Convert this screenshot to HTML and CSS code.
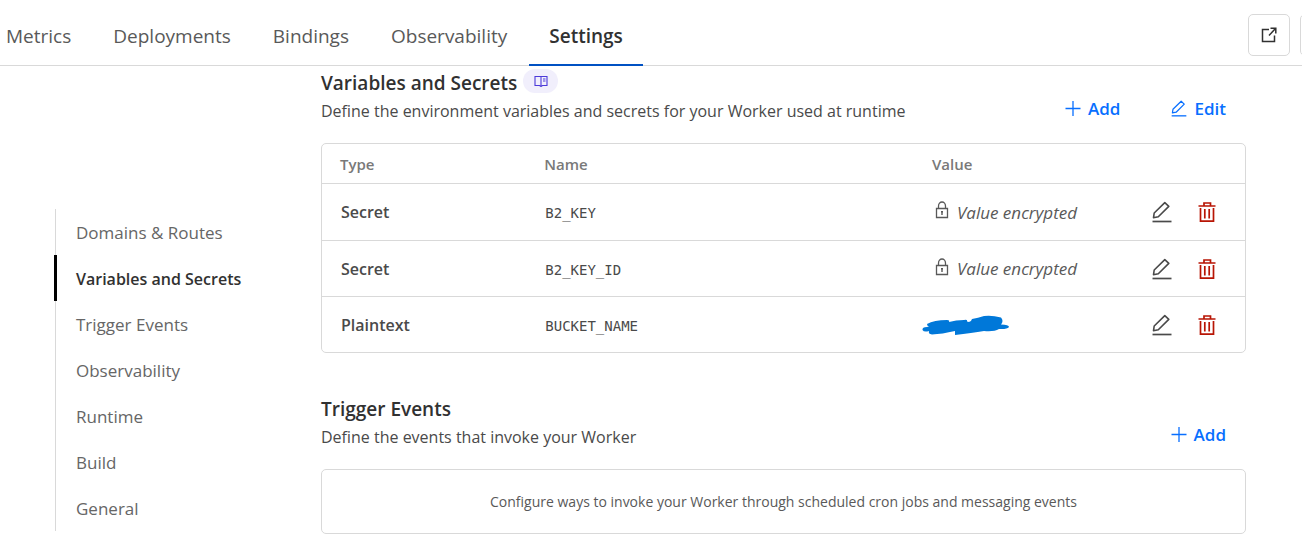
FILE: index.html
```
<!DOCTYPE html>
<html lang="en">
<head>
<meta charset="utf-8">
<meta name="viewport" content="width=device-width, initial-scale=1">
<title>Worker settings</title>
<link rel="stylesheet" href="styles.css">
</head>
<body>
<svg class="sprite" aria-hidden="true">
  <symbol id="plus" viewBox="0 0 16 16"><path d="M8 0.500V15.500M0.500 8H15.500" fill="none" stroke="currentColor" stroke-width="1.300"/></symbol>
  <symbol id="pencil" viewBox="0 0 20 22"><path d="M1.500 16.700L2.200 12L12.800 1.600L16.800 5.400L6.300 15.800Z" fill="none" stroke="currentColor" stroke-width="1.600" stroke-linejoin="round"/><path d="M0.500 20.500H19.500" stroke="currentColor" stroke-width="1.700"/></symbol>
  <symbol id="trash" viewBox="0 0 18 22"><path d="M0.500 5H17.500M6 5V2H12.500V5M2.500 7V20.200H15.500V7M6.800 8V17.500M11.200 8V17.500" fill="none" stroke="currentColor" stroke-width="1.700"/></symbol>
  <symbol id="lock" viewBox="0 0 14 18"><path d="M1.500 7.500H12.500V16.500H1.500ZM3.500 7.500V5A3.500 4 0 0 1 10.500 5V7.500" fill="none" stroke="currentColor" stroke-width="1.300"/><path d="M7 10V14M6 10.800H8" stroke="currentColor" stroke-width="1.400"/></symbol>
</svg>

<header class="topbar">
  <nav class="tabs" aria-label="Worker">
    <a class="tab" href="#">Metrics</a>
    <a class="tab" href="#">Deployments</a>
    <a class="tab" href="#">Bindings</a>
    <a class="tab" href="#">Observability</a>
    <a class="tab tab-active" href="#" aria-current="page">Settings</a>
  </nav>
  <div class="topbar-actions">
    <button class="square-button" type="button" aria-label="Open in new tab">
      <svg width="16" height="16" viewBox="0 0 16 16"><path d="M8 2.500H1.500V14.500H13.500V8.500M8 8.500L14.500 1.500M9.500 1.200H14.800V6.500" fill="none" stroke="currentColor" stroke-width="1.500"/></svg>
    </button>
    <button class="square-button" type="button" aria-label="More"></button>
  </div>
</header>

<div class="layout">
  <nav class="sidebar" aria-label="Settings sections">
    <a class="side-link" href="#">Domains &amp; Routes</a>
    <a class="side-link side-link-active" href="#variables" aria-current="true">Variables and Secrets</a>
    <a class="side-link" href="#triggers">Trigger Events</a>
    <a class="side-link" href="#">Observability</a>
    <a class="side-link" href="#">Runtime</a>
    <a class="side-link" href="#">Build</a>
    <a class="side-link" href="#">General</a>
  </nav>

  <main class="content">
    <section class="section" id="variables">
      <div class="section-head">
        <div>
          <div class="title-row">
            <h2 class="section-title">Variables and Secrets</h2>
            <a class="docs-badge" href="#" aria-label="Documentation">
              <svg width="14" height="12" viewBox="0 0 14 12"><path d="M7 1.500H1V10.500H5.500L7 11.500L8.500 10.500H13V1.500H7V11" fill="none" stroke="currentColor" stroke-width="1.100"/><path d="M9 4H11.500M9 6H11.500" stroke="currentColor"/></svg>
            </a>
          </div>
          <p class="section-text">Define the environment variables and secrets for your Worker used at runtime</p>
        </div>
        <div class="section-actions">
          <button class="text-button" type="button"><svg class="action-icon"><use href="#plus"/></svg>Add</button>
          <button class="text-button" type="button"><svg class="action-icon"><use href="#pencil"/></svg>Edit</button>
        </div>
      </div>
      <div class="card">
        <table class="table">
          <thead>
            <tr><th class="col-type">Type</th><th class="col-name">Name</th><th class="col-value">Value</th><th class="col-tools"></th></tr>
          </thead>
          <tbody>
            <tr>
              <td class="type">Secret</td><td class="name">B2_KEY</td>
              <td><span class="encrypted"><svg class="lock-icon"><use href="#lock"/></svg>Value encrypted</span></td>
              <td><div class="tools"><button class="icon-button" type="button" aria-label="Edit B2_KEY"><svg class="pencil-icon"><use href="#pencil"/></svg></button><button class="icon-button danger" type="button" aria-label="Delete B2_KEY"><svg class="trash-icon"><use href="#trash"/></svg></button></div></td>
            </tr>
            <tr>
              <td class="type">Secret</td><td class="name">B2_KEY_ID</td>
              <td><span class="encrypted"><svg class="lock-icon"><use href="#lock"/></svg>Value encrypted</span></td>
              <td><div class="tools"><button class="icon-button" type="button" aria-label="Edit B2_KEY_ID"><svg class="pencil-icon"><use href="#pencil"/></svg></button><button class="icon-button danger" type="button" aria-label="Delete B2_KEY_ID"><svg class="trash-icon"><use href="#trash"/></svg></button></div></td>
            </tr>
            <tr>
              <td class="type">Plaintext</td><td class="name">BUCKET_NAME</td>
              <td><svg width="88" height="20" viewBox="0 0 88 20" role="img" aria-label="Hidden value"><path d="M5 12Q0 12 0.500 15Q2 17.500 7 16Q6 19 10 19.500Q20 19 33 16V20Q50 18 62 16Q72 17 77 14Q85 14.500 87 12Q87 9.500 79 9.500Q82 6 79 2.500Q70 0 62 1Q56 3 50 4Q49 8 45 6.500Q46 4 42 5Q34 5 27 7Q28 5 25 5Q12 5 5 9Q5 11 7 11.500Z" fill="#0078d9"/></svg></td>
              <td><div class="tools"><button class="icon-button" type="button" aria-label="Edit BUCKET_NAME"><svg class="pencil-icon"><use href="#pencil"/></svg></button><button class="icon-button danger" type="button" aria-label="Delete BUCKET_NAME"><svg class="trash-icon"><use href="#trash"/></svg></button></div></td>
            </tr>
          </tbody>
        </table>
      </div>
    </section>

    <section class="section" id="triggers">
      <div class="section-head">
        <div>
          <h2 class="section-title">Trigger Events</h2>
          <p class="section-text">Define the events that invoke your Worker</p>
        </div>
        <div class="section-actions">
          <button class="text-button" type="button"><svg class="action-icon"><use href="#plus"/></svg>Add</button>
        </div>
      </div>
      <div class="card empty">Configure ways to invoke your Worker through scheduled cron jobs and messaging events</div>
    </section>
  </main>
</div>
</body>
</html>
```
FILE: styles.css
```
* { box-sizing: border-box; }
body {
  margin: 0;
  overflow-x: hidden;
  background: #fff;
  color: #4a4a4a;
  font-family: "Segoe UI", "Open Sans", "Noto Sans", sans-serif;
  font-size: 16px;
}
a { color: inherit; text-decoration: none; }
button { font: inherit; color: inherit; background: none; border: 0; padding: 0; cursor: pointer; }
svg { display: block; flex: none; }
.sprite { position: absolute; width: 0; height: 0; }

.topbar {
  display: flex;
  justify-content: space-between;
  height: 66px;
  box-shadow: inset 0 -1px #d9d9d9;
  overflow: hidden;
}
.tabs { display: flex; gap: 2px; margin-left: -14px; font-size: 19px; }
.tab { height: 66px; padding: 0 20px; line-height: 72px; color: #595959; white-space: nowrap; }
.tab-active { color: #313131; font-weight: 600; border-bottom: 2px solid #0051c3; }
.topbar-actions { display: flex; gap: 10px; margin: 14px -40px 0 0; }
.square-button {
  display: flex;
  align-items: center;
  justify-content: center;
  width: 42px;
  height: 42px;
  border: 1px solid #d9d9d9;
  border-radius: 5px;
  color: #313131;
}

.layout { display: flex; align-items: flex-start; padding: 0 56px 8px 55px; }
.sidebar { flex: none; width: 266px; margin-top: 143px; }
.side-link {
  display: block;
  height: 46px;
  border-left: 1px solid #d9d9d9;
  padding-left: 20px;
  line-height: 48px;
  font-size: 17px;
  color: #666;
}
.side-link-active {
  margin-left: -1px;
  border-left: 3px solid #000;
  padding-left: 19px;
  font-size: 16px;
  font-weight: 600;
  color: #313131;
}

.content { flex: 1; min-width: 0; display: flex; flex-direction: column; gap: 42px; padding-top: 3px; }
.section-head { display: flex; justify-content: space-between; align-items: flex-end; margin-bottom: 18px; }
.title-row { display: flex; align-items: flex-start; gap: 6px; }
.section-title { margin: 0; font-size: 19px; font-weight: 600; line-height: 28px; color: #313131; }
.docs-badge { display: flex; align-items: center; justify-content: center; width: 35px; height: 24px; border-radius: 12px; background: #f1effc; color: #4c3ad9; }
.section-text { margin: 0; font-size: 16px; line-height: 28px; }
.section-actions { display: flex; gap: 51px; padding-right: 20px; }
.text-button { display: flex; align-items: center; gap: 7px; line-height: 32px; font-size: 17px; font-weight: 600; color: #086fff; }
.action-icon { width: 16px; height: 17px; margin-bottom: 2px; }

.card { border: 1px solid #d9d9d9; border-radius: 5px; }
.table { width: 100%; table-layout: fixed; border-spacing: 0; }
.table th { height: 39px; padding: 1px 0 0 18px; text-align: left; font-size: 15px; font-weight: 600; color: #797979; }
.table th.col-name { padding-left: 10px; }
.table th.col-value { padding-left: 10px; }
.table td { height: 56px; padding: 0; border-top: 1px solid #d9d9d9; }
.table tbody tr:first-child td { height: 57px; }
.col-type { width: 23%; }
.col-name { width: 42%; }
.col-tools { width: 93px; }
.table td.type { padding-left: 19px; font-size: 16px; font-weight: 600; }
.table td.name { padding: 2px 0 0 11px; font-family: Consolas, "DejaVu Sans Mono", monospace; font-size: 14px; }
.encrypted { display: flex; align-items: center; gap: 8px; padding-left: 13px; font-size: 17px; font-style: italic; color: #595959; white-space: nowrap; }
.lock-icon { width: 14px; height: 18px; margin-bottom: 4px; }
.tools { display: flex; gap: 26px; }
.icon-button { display: flex; }
.danger { color: #b81504; }
.pencil-icon { width: 20px; height: 22px; }
.trash-icon { width: 18px; height: 22px; }
.empty { padding: 20px; text-align: center; font-size: 14px; line-height: 23px; color: #595959; }
```
